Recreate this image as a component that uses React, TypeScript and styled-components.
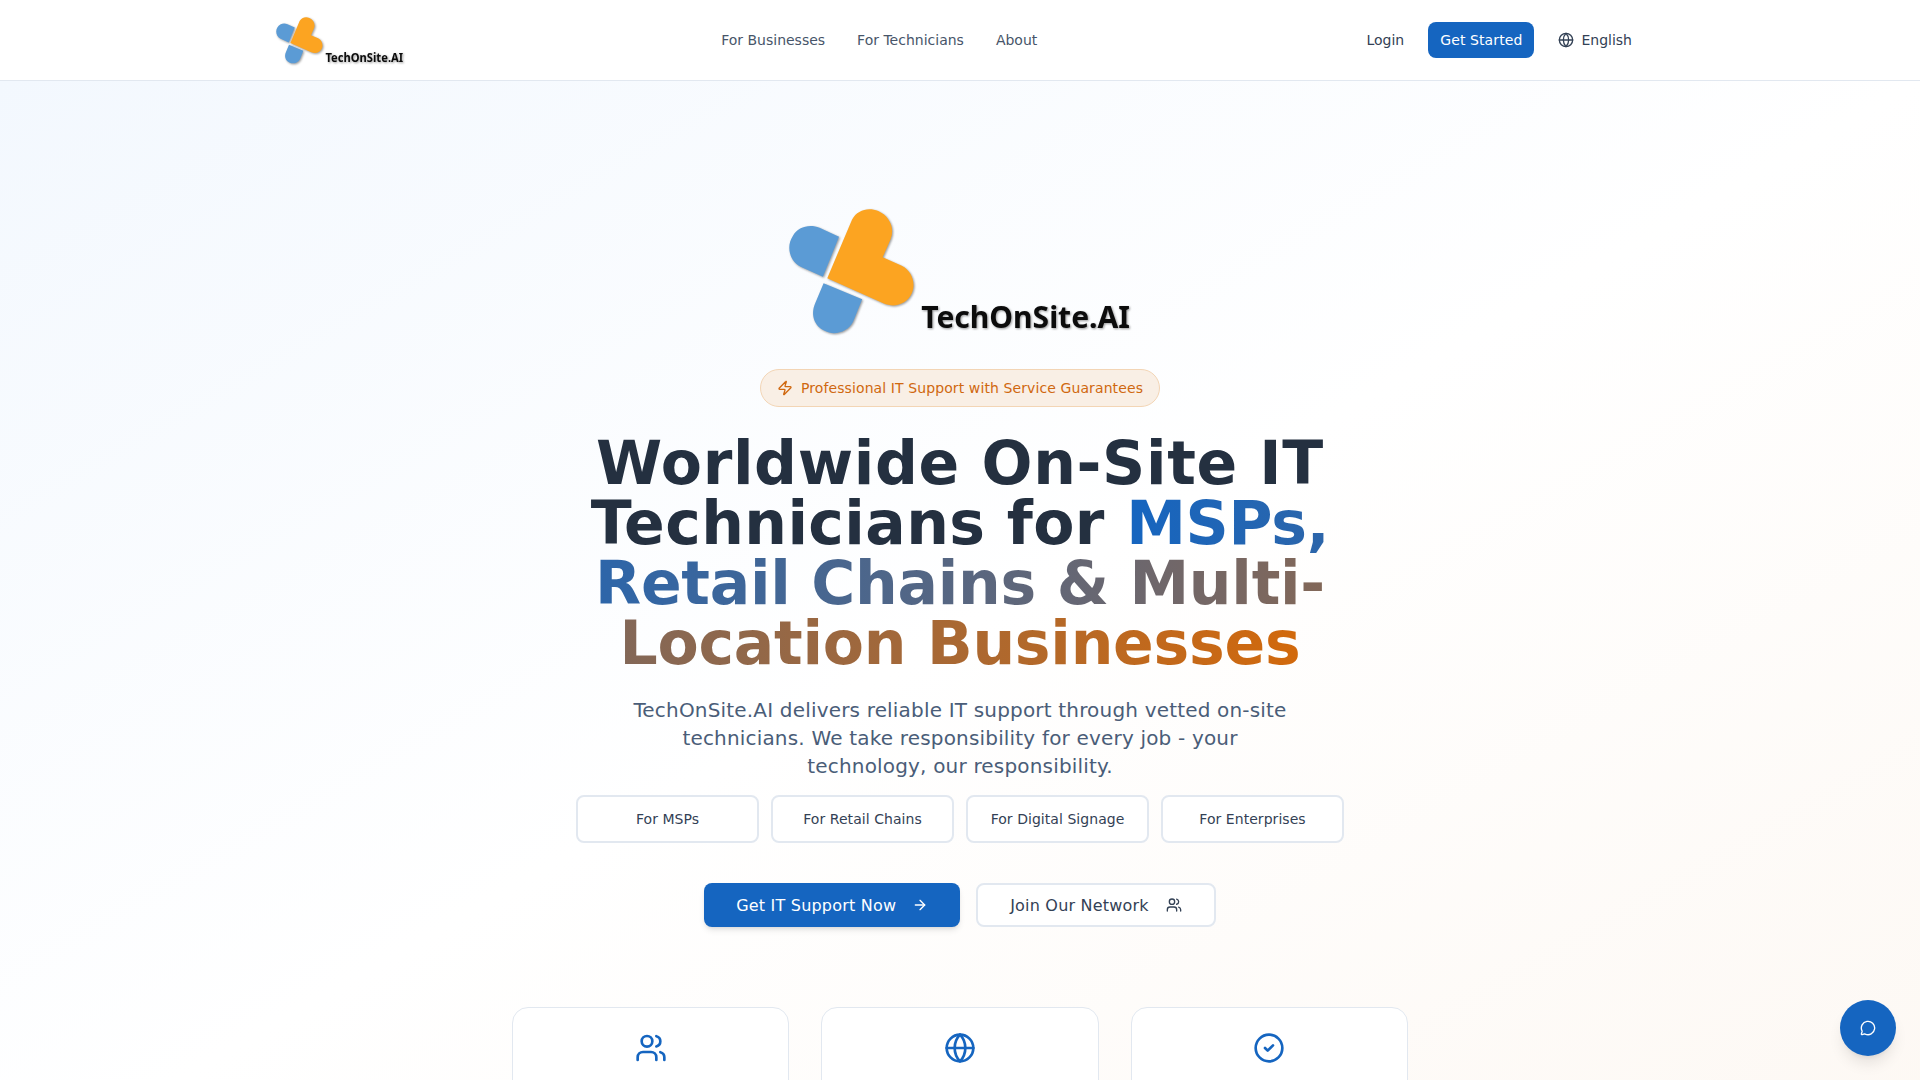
import styled, { createGlobalStyle } from "styled-components";
import { ArrowRight, CircleCheck, Globe, MessageCircle, Users, Zap } from "lucide-react";

const GlobalStyle = createGlobalStyle`
    * {
        box-sizing: border-box;
    }
    html, body {
        margin: 0;
        padding: 0;
        background: #ffffff;
        font-family: "DejaVu Sans", sans-serif;
    }
`;

const BrandLogo = ({ width }: { width: number }) => (
    <LogoSvg width={width} viewBox="80 50 1040 390" role="img" aria-label="TechOnSite.AI">
        <path fill="#5b9bd5" d="M238 142 L190 261 L125 232 C90 215 80 170 100 140 C115 112 150 103 180 115 Z" />
        <path fill="#5b9bd5" d="M192 280 L307 328 L280 395 C265 425 225 438 195 422 C165 408 152 375 167 340 Z" />
        <path fill="#fca421" d="M203 265 L277 90 C292 62 325 52 355 65 C388 80 405 115 392 148 L368 203 L425 228 C455 243 468 280 455 310 C440 342 405 355 370 340 Z" />
        <LogoText x="483" y="415" textLength="622" lengthAdjust="spacingAndGlyphs">TechOnSite.AI</LogoText>
    </LogoSvg>
);

const cards = [Users, Globe, CircleCheck];
const audiences = ["For MSPs", "For Retail Chains", "For Digital Signage", "For Enterprises"];

const App = () => {
    return (
        <>
            <GlobalStyle />
            <Header>
                <HeaderInner>
                    <BrandLogo width={130} />
                    <Nav>
                        <NavLink>For Businesses</NavLink>
                        <NavLink>For Technicians</NavLink>
                        <NavLink>About</NavLink>
                    </Nav>
                    <HeaderActions>
                        <LoginLink>Login</LoginLink>
                        <GetStarted>Get Started</GetStarted>
                        <Language>
                            <Globe size={16} strokeWidth={2} />
                            English
                        </Language>
                    </HeaderActions>
                </HeaderInner>
            </Header>
            <Hero>
                <BrandLogo width={349} />
                <Badge>
                    <Zap size={16} strokeWidth={2} />
                    Professional IT Support with Service Guarantees
                </Badge>
                <Title>
                    <TitleLead>Worldwide On-Site IT</TitleLead> Technicians for{" "}
                    <Gradient>MSPs, Retail Chains &amp; Multi-Location Businesses</Gradient>
                </Title>
                <Subtitle>
                    TechOnSite.AI delivers reliable IT support through vetted on-site technicians. We take
                    responsibility for every job - your technology, our responsibility.
                </Subtitle>
                <AudienceGrid>
                    {audiences.map((label) => (
                        <AudienceButton key={label}>{label}</AudienceButton>
                    ))}
                </AudienceGrid>
                <CtaRow>
                    <PrimaryCta>
                        Get IT Support Now
                        <ArrowRight size={16} strokeWidth={2} />
                    </PrimaryCta>
                    <SecondaryCta>
                        Join Our Network
                        <Users size={16} strokeWidth={2} />
                    </SecondaryCta>
                </CtaRow>
                <Cards>
                    {cards.map((Icon, i) => (
                        <Card key={i}>
                            <Icon size={32} strokeWidth={2} color="#1565c0" />
                        </Card>
                    ))}
                </Cards>
            </Hero>
            <ChatButton aria-label="Chat">
                <MessageCircle size={16} strokeWidth={2} />
            </ChatButton>
        </>
    );
};

const LogoSvg = styled.svg`
    display: block;
    flex-shrink: 0;
    overflow: visible;
    filter: drop-shadow(1px 1px 1px rgba(0, 0, 0, 0.4));
`;

const LogoText = styled.text`
    font-family: "Noto Sans", sans-serif;
    font-weight: 700;
    font-size: 92px;
    fill: #0c0c0c;
`;

const Header = styled.header`
    height: 81px;
    background: #ffffff;
    border-bottom: 1px solid #e2e8f0;
`;

const HeaderInner = styled.div`
    position: relative;
    max-width: 1400px;
    height: 80px;
    margin: 0 auto;
    padding: 0 28px 0 15px;
    display: flex;
    align-items: center;
    justify-content: space-between;
`;

const Nav = styled.nav`
    display: flex;
    gap: 32px;
    font-size: 14px;
    margin-left: -13px;
`;

const NavLink = styled.a`
    color: #475569;
`;

const HeaderActions = styled.div`
    display: flex;
    align-items: center;
    font-size: 14px;
    color: #334155;
`;

const LoginLink = styled.a`
    margin-right: 24px;
`;

const GetStarted = styled.button`
    height: 36px;
    padding: 0 12px;
    border: none;
    border-radius: 8px;
    background: #1565c0;
    color: #ffffff;
    font: inherit;
    letter-spacing: 0.1px;
    margin-right: 24px;
`;

const Language = styled.div`
    display: flex;
    align-items: center;
    gap: 7px;
`;

const Hero = styled.main`
    height: 1100px;
    padding-top: 125px;
    display: flex;
    flex-direction: column;
    align-items: center;
    background: linear-gradient(to bottom right, #f3f8fe 0%, #ffffff 50%, #fdf8f3 100%);
`;

const Badge = styled.div`
    display: flex;
    align-items: center;
    gap: 8px;
    height: 38px;
    margin-top: 32px;
    padding: 0 16px;
    border: 1px solid #f3d5b5;
    border-radius: 19px;
    background: #f9efe5;
    color: #d0680f;
    font-size: 14px;
    letter-spacing: 0.1px;
`;

const Title = styled.h1`
    width: 768px;
    margin: 26px 0 0;
    font-size: 60px;
    line-height: 60px;
    font-weight: 700;
    letter-spacing: 0.4px;
    text-align: center;
    color: #243040;
`;

const TitleLead = styled.span`
    letter-spacing: 0.65px;
`;

const Gradient = styled.span`
    background: linear-gradient(90deg, #1565c0, #d2690c);
    -webkit-background-clip: text;
    background-clip: text;
    color: transparent;
    letter-spacing: -0.25px;
`;

const Subtitle = styled.p`
    width: 672px;
    margin: 23px 0 0;
    font-size: 20px;
    line-height: 28px;
    letter-spacing: 0.18px;
    text-align: center;
    color: #4a5d78;
`;

const AudienceGrid = styled.div`
    display: grid;
    grid-template-columns: repeat(4, 183px);
    gap: 12px;
    margin-top: 15px;
`;

const AudienceButton = styled.button`
    height: 48px;
    border: 2px solid #e2e8f0;
    border-radius: 8px;
    background: #ffffff;
    color: #334155;
    font: inherit;
    font-size: 14px;
    letter-spacing: 0.05px;
`;

const CtaRow = styled.div`
    display: flex;
    gap: 16px;
    margin-top: 40px;
`;

const PrimaryCta = styled.button`
    height: 44px;
    padding: 1px 32px 0;
    display: flex;
    align-items: center;
    gap: 16px;
    border: none;
    border-radius: 8px;
    background: #1565c0;
    color: #ffffff;
    font: inherit;
    font-size: 16px;
    letter-spacing: 0.2px;
    box-shadow: 0 4px 6px -1px rgba(0, 0, 0, 0.1), 0 2px 4px -2px rgba(0, 0, 0, 0.1);
`;

const SecondaryCta = styled.button`
    height: 44px;
    padding: 1px 32px 0;
    display: flex;
    align-items: center;
    gap: 17px;
    border: 2px solid #e2e8f0;
    border-radius: 8px;
    background: #ffffff;
    color: #334155;
    font: inherit;
    font-size: 16px;
    letter-spacing: 0.2px;
`;

const Cards = styled.div`
    display: grid;
    grid-template-columns: repeat(3, 1fr);
    gap: 32px;
    width: 896px;
    margin-top: 80px;
`;

const Card = styled.div`
    height: 160px;
    padding-top: 24px;
    display: flex;
    justify-content: center;
    align-items: flex-start;
    border: 1px solid #e2e8f0;
    border-radius: 16px;
    background: #ffffff;
`;

const ChatButton = styled.button`
    position: fixed;
    right: 24px;
    bottom: 24px;
    width: 56px;
    height: 56px;
    display: flex;
    align-items: center;
    justify-content: center;
    border: none;
    border-radius: 50%;
    background: #1565c0;
    color: #ffffff;
    box-shadow: 0 10px 15px -3px rgba(0, 0, 0, 0.1), 0 4px 6px -4px rgba(0, 0, 0, 0.1);
`;

export default App;
